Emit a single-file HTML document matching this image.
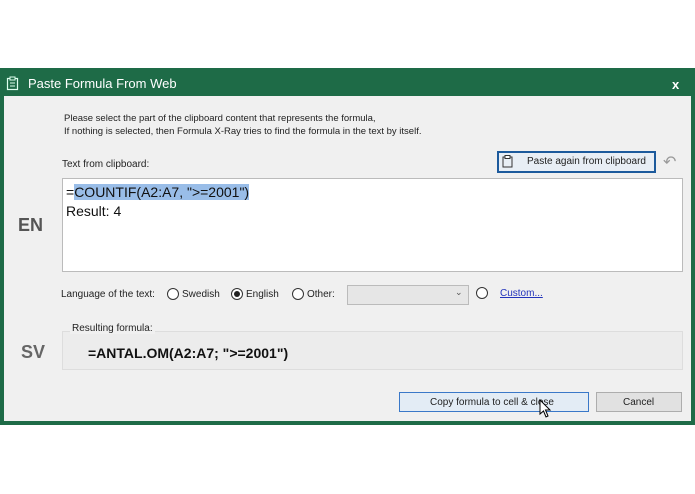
<!DOCTYPE html>
<html><head><style>
body{margin:0;width:695px;height:494px;background:#fff;position:relative;font-family:"Liberation Sans",sans-serif;overflow:hidden}
.a{position:absolute}
.f{font-size:10px;color:#222}
</style></head><body>
<div class="a" style="left:0;top:68px;width:695px;height:357px;background:#1e6b47"></div>
<div class="a" style="left:4px;top:96px;width:687px;height:325px;background:#f0f0f0"></div>
<svg class="a" style="left:6px;top:76px" width="14" height="15"><rect x="1.5" y="2.5" width="10" height="11" fill="none" stroke="#dfe" stroke-width="1.2"/><rect x="4" y="1" width="5" height="3" fill="#1e6b47" stroke="#dfe"/><line x1="4" y1="7" x2="9" y2="7" stroke="#dfe"/><line x1="4" y1="10" x2="9" y2="10" stroke="#dfe"/></svg>
<div class="a" style="left:28px;top:76px;font-size:13px;color:#fff">Paste Formula From Web</div>
<div class="a" style="left:672px;top:77px;font-size:13px;color:#fff;font-weight:bold">x</div>
<div class="a f" style="left:64px;top:112px;line-height:13px;font-size:9.5px">Please select the part of the clipboard content that represents the formula,<br>If nothing is selected, then Formula X-Ray tries to find the formula in the text by itself.</div>
<div class="a f" style="left:62px;top:159px">Text from clipboard:</div>
<div class="a" style="left:497px;top:151px;width:155px;height:18px;border:2px solid #1c5a9c;background:#e8eef5"></div>
<svg class="a" style="left:502px;top:155px" width="12" height="13"><rect x="1" y="2" width="9" height="10" fill="none" stroke="#333"/><rect x="3" y="0.5" width="5" height="3" fill="#fff" stroke="#333"/></svg>
<div class="a f" style="left:527px;top:156px">Paste again from clipboard</div>
<div class="a" style="left:663px;top:152px;font-size:16px;color:#999">↶</div>
<div class="a" style="left:62px;top:178px;width:619px;height:92px;background:#fff;border:1px solid #bbb"></div>
<div class="a" style="left:66px;top:183px;font-size:14px;color:#111;line-height:19px">=<span style="background:#99bde8">COUNTIF(A2:A7, "&gt;=2001")</span><br>Result: 4</div>
<div class="a" style="left:18px;top:215px;font-size:18px;font-weight:bold;color:#555">EN</div>
<div class="a f" style="left:61px;top:289px">Language of the text:</div>
<div class="a" style="left:167px;top:288px;width:10px;height:10px;border:1px solid #333;border-radius:50%;background:#fff"></div>
<div class="a f" style="left:182px;top:289px">Swedish</div>
<div class="a" style="left:231px;top:288px;width:10px;height:10px;border:1px solid #333;border-radius:50%;background:#fff"></div>
<div class="a" style="left:234px;top:291px;width:6px;height:6px;border-radius:50%;background:#222"></div>
<div class="a f" style="left:246px;top:289px">English</div>
<div class="a" style="left:292px;top:288px;width:10px;height:10px;border:1px solid #333;border-radius:50%;background:#fff"></div>
<div class="a f" style="left:307px;top:289px">Other:</div>
<div class="a" style="left:347px;top:285px;width:120px;height:18px;border:1px solid #bbb;background:#e6e6e6"></div>
<div class="a" style="left:455px;top:287px;font-size:9px;color:#555">⌄</div>
<div class="a" style="left:476px;top:287px;width:10px;height:10px;border:1px solid #333;border-radius:50%;background:#fff"></div>
<div class="a" style="left:500px;top:288px;font-size:10px;color:#2233bb;text-decoration:underline">Custom...</div>
<div class="a" style="left:62px;top:331px;width:619px;height:37px;background:#ececec;border:1px solid #ddd"></div>
<div class="a f" style="left:70px;top:323px;background:#f0f0f0;padding:0 2px">Resulting formula:</div>
<div class="a" style="left:88px;top:345px;font-size:14px;font-weight:bold;color:#111">=ANTAL.OM(A2:A7; "&gt;=2001")</div>
<div class="a" style="left:21px;top:342px;font-size:18px;font-weight:bold;color:#666">SV</div>
<div class="a" style="left:399px;top:392px;width:188px;height:18px;border:1px solid #3a78c8;background:#e3ecf5"></div>
<div class="a f" style="left:430px;top:397px">Copy formula to cell &amp; close</div>
<div class="a" style="left:596px;top:392px;width:84px;height:18px;border:1px solid #adadad;background:#e1e1e1"></div>
<div class="a f" style="left:623px;top:397px">Cancel</div>
<svg class="a" style="left:538px;top:399px" width="14" height="20"><path d="M2 1 L2 15 L5.5 12 L8 18 L10 17 L7.5 11 L12 11 Z" fill="#fff" stroke="#000"/></svg>
</body></html>
